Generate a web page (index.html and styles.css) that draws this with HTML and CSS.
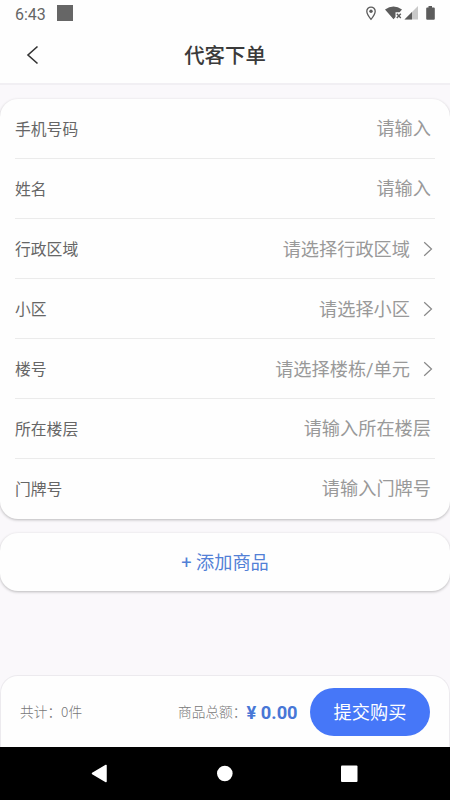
FILE: index.html
```html
<!DOCTYPE html>
<html lang="zh-CN">
<head>
<meta charset="utf-8">
<title>代客下单</title>
<link rel="stylesheet" href="styles.css">
</head>
<body>
<div class="screen">
  <div class="status">
    <span class="time">6:43</span>
    <span class="square"></span>
    <svg class="status-icons" width="76" height="20" viewBox="0 0 76 20">
      <path d="M8 1.100a4.200 4.200 0 0 0-4.200 4.200c0 3.100 4.200 8 4.200 8s4.200-4.900 4.200-8A4.200 4.200 0 0 0 8 1.100z" fill="none" stroke="#5c5c5c" stroke-width="1.300"/>
      <circle cx="8" cy="5.300" r="1.700" fill="#5c5c5c"/>
      <path d="M22 3.500Q30.500-2.500 39 3.500L36.600 6.300H32.500V11L30.500 13.200z" fill="#5c5c5c"/>
      <path d="M33.800 7.800l4 4.200m0-4.200l-4 4.200" stroke="#5c5c5c" stroke-width="1.400"/>
      <path d="M55 0v13.500H41.500z" fill="#c9c9c9"/>
      <path d="M49 6v7.500h-7.500z" fill="#5c5c5c"/>
      <path d="M65.500 0h3.500v1.500h1.800q1 0 1 1v10.200q0 1-1 1h-6.600q-1 0-1-1V2.500q0-1 1-1h1.300z" fill="#5c5c5c"/>
    </svg>
  </div>
  <header class="header">
    <svg class="back" width="14" height="20" viewBox="0 0 14 20"><path d="M11.500 1.500L2 10l9.500 8.500" fill="none" stroke="#333" stroke-width="1.600"/></svg>
    <h1>代客下单</h1>
  </header>
  <main class="content">
    <section class="card form">
      <div class="row"><span class="label">手机号码</span><span class="value">请输入</span></div>
      <div class="row"><span class="label">姓名</span><span class="value">请输入</span></div>
      <div class="row"><span class="label">行政区域</span><span class="value pick">请选择行政区域</span><svg class="chevron" width="10" height="16" viewBox="0 0 10 16"><path d="M1.200 1.200L8.500 8l-7.300 6.800"/></svg></div>
      <div class="row"><span class="label">小区</span><span class="value pick">请选择小区</span><svg class="chevron" width="10" height="16" viewBox="0 0 10 16"><path d="M1.200 1.200L8.500 8l-7.300 6.800"/></svg></div>
      <div class="row"><span class="label">楼号</span><span class="value pick">请选择楼栋/单元</span><svg class="chevron" width="10" height="16" viewBox="0 0 10 16"><path d="M1.200 1.200L8.500 8l-7.300 6.800"/></svg></div>
      <div class="row"><span class="label">所在楼层</span><span class="value">请输入所在楼层</span></div>
      <div class="row"><span class="label">门牌号</span><span class="value">请输入门牌号</span></div>
    </section>
    <section class="card add">+ 添加商品</section>
  </main>
  <footer class="footer">
    <span class="count">共计：0件</span>
    <span class="total">商品总额：</span>
    <span class="price">¥ 0.00</span>
    <span class="submit">提交购买</span>
  </footer>
  <nav class="nav">
    <svg width="450" height="53" viewBox="0 0 450 53" fill="#fff">
      <path d="M92.500 26.500L106 18.500v16z" stroke="#fff" stroke-width="1.500" stroke-linejoin="round"/>
      <circle cx="224.800" cy="26.500" r="7.800"/>
      <rect x="341" y="18.500" width="16.500" height="16.500" rx="1"/>
    </svg>
  </nav>
</div>
</body>
</html>
```
FILE: styles.css
```css
* { box-sizing: border-box; }
body {
  margin: 0;
  background: #faf8fb;
  font-family: Roboto, "Noto Sans CJK SC", sans-serif;
  color: #555;
}
.screen {
  display: flex;
  flex-direction: column;
  width: 450px;
  height: 800px;
  overflow: hidden;
}
.status {
  display: flex;
  height: 27px;
  padding: 5px 11px 0 15px;
  background: #fefefe;
}
.time {
  width: 42px;
  font-size: 16px;
  line-height: 19px;
  color: #666;
}
.square {
  width: 16px;
  height: 16px;
  background: #666;
}
.status-icons {
  margin: 1px 0 0 auto;
}
.header {
  display: grid;
  grid-template-columns: 1fr auto 1fr;
  align-items: center;
  height: 58px;
  background: #fefefe;
  border-bottom: 2px solid #f1eff3;
}
.back { margin-left: 26px; }
h1 {
  margin: 0;
  padding-top: 2px;
  font-size: 20.4px;
  line-height: 30px;
  font-weight: 500;
  color: #3a3a3a;
}
.content {
  display: flex;
  flex-direction: column;
  flex: 1;
  gap: 14px;
  padding-top: 14px;
}
.card {
  background: #fefefe;
  border-radius: 18px;
  box-shadow: 0 1px 3px rgba(0, 0, 0, .26);
}
.form {
  height: 420px;
  padding: 0 15px;
}
.row {
  display: flex;
  align-items: center;
  height: 60px;
  padding-right: 4px;
  border-bottom: 1px solid #ebebeb;
}
.row:last-child { border-bottom: 0; }
.label {
  font-size: 15.8px;
  line-height: 24px;
  color: #666;
  padding-top: 2px;
}
.value {
  margin-left: auto;
  font-size: 18.2px;
  line-height: 28px;
  color: #999;
}
.pick { padding-top: 2px; }
.chevron {
  margin: 0 -2px 0 13px;
  fill: none;
  stroke: #888;
  stroke-width: 1.2;
}
.add {
  height: 58px;
  font-size: 18.2px;
  line-height: 60px;
  text-align: center;
  color: #5280d6;
}
.footer {
  display: flex;
  align-items: center;
  height: 72px;
  padding: 0 19px;
  background: #fefefe;
  border: 1px solid #eceaee;
  border-bottom: 0;
  border-radius: 18px 18px 0 0;
}
.count, .total {
  padding-bottom: 1px;
  font-family: "Noto Sans CJK SC", sans-serif;
  font-size: 13.7px;
  font-weight: 300;
  color: #777;
}
.total { margin-left: auto; }
.price {
  width: 63.5px;
  padding-top: 2px;
  font-size: 18.3px;
  font-weight: 700;
  color: #4877d6;
}
.submit {
  width: 120px;
  height: 48px;
  border-radius: 24px;
  background: #4677f8;
  color: #fff;
  font-size: 18.2px;
  line-height: 50px;
  text-align: center;
}
.nav {
  height: 53px;
  background: #000;
}
.nav svg { display: block; }
```
